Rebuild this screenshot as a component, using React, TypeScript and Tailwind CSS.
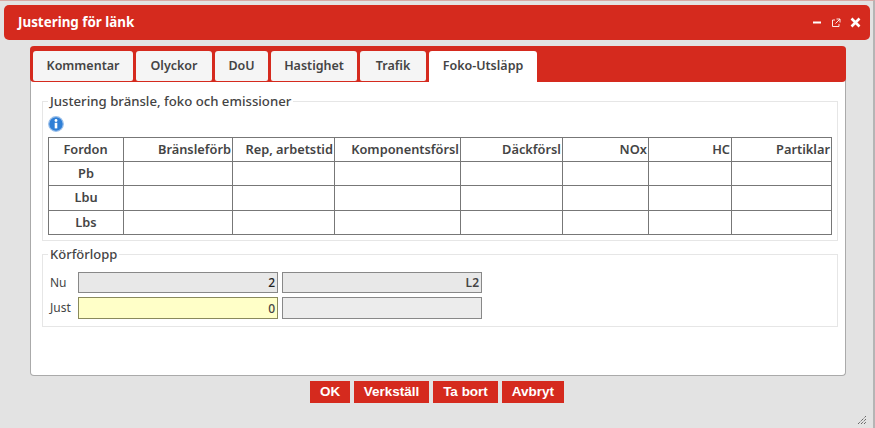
const font = { fontFamily: "'Noto Sans', 'DejaVu Sans', sans-serif" };

const tabs = ["Kommentar", "Olyckor", "DoU", "Hastighet", "Trafik"];
const tabWidths = ["w-[100px]", "w-[76px]", "w-[53px]", "w-[86px]", "w-[66px]"];
const cols = [
  { t: "Fordon", w: "w-[75px]", c: "text-center" },
  { t: "Bränsleförb", w: "w-[109px]", c: "text-right" },
  { t: "Rep, arbetstid", w: "w-[102px]", c: "text-right" },
  { t: "Komponentsförsl", w: "w-[126px]", c: "text-right" },
  { t: "Däckförsl", w: "w-[102px]", c: "text-right" },
  { t: "NOx", w: "w-[86px]", c: "text-right" },
  { t: "HC", w: "w-[83px]", c: "text-right" },
  { t: "Partiklar", w: "w-[100px]", c: "text-right" },
];
const rows = [
  { t: "Pb", h: "h-[24px]" },
  { t: "Lbu", h: "h-[25px]" },
  { t: "Lbs", h: "h-[24px]" },
];

export default function App() {
  return (
    <div style={font} className="w-[875px] h-[428px] overflow-hidden bg-[#e3e3e3] border-r-2 border-[#b5b5b5] border-t border-t-[#d9a9a5] pt-[4px] pl-[4px] pr-[2px] flex flex-col relative">
      <div className="h-[35px] w-[866px] shrink-0 bg-[#d52a1e] rounded-[5px] pl-[14px] pr-[9px] flex items-center justify-between">
        <span className="text-white font-bold text-[13.4px]">Justering för länk</span>
        <div className="flex items-center text-white">
          <svg width="10" height="10" viewBox="0 0 10 10" className="mr-[9px]"><rect x="1" y="3.5" width="8" height="2" fill="#fff" /></svg>
          <svg width="10" height="10" viewBox="0 0 10 10" fill="none" stroke="#fff" strokeWidth="0.9" className="mr-[9px]">
            <path d="M4 2H1.5v6.5H8V6" />
            <path d="M5.5 1H9v3.5M9 1 4.5 5.5" />
          </svg>
          <svg width="11" height="11" viewBox="0 0 11 11" stroke="#fff" strokeWidth="2.6"><path d="M1.5 1.5l8 8M9.5 1.5l-8 8" /></svg>
        </div>
      </div>

      <div className="ml-[26px] mt-[6px] w-[816px] h-[330px] shrink-0 bg-white border-x border-b border-[#aaa] rounded-[4px] flex flex-col">
        <div className="h-[36px] -mx-px bg-[#d52a1e] rounded-[4px] flex items-end pl-[3px] gap-[3px] pt-[5px]">
          {tabs.map((t, i) => (
            <div key={t} className={`${tabWidths[i]} h-[30px] mb-px bg-[#f5f5f5] rounded-t-[3px] rounded-b-[2px] text-[12.5px] font-semibold text-[#444] flex items-center justify-center`}>{t}</div>
          ))}
          <div className="w-[108px] h-[31px] bg-white rounded-t-[3px] text-[12.5px] font-semibold text-[#444] flex items-center justify-center">Foko-Utsläpp</div>
        </div>

        <fieldset className="ml-[11px] mt-[12px] w-[796px] h-[147px] border border-[#e6e6e6] px-[5px]">
          <legend className="px-[2px] text-[13.2px] font-medium text-[#444] leading-[14px]">Justering bränsle, foko och emissioner</legend>
          <svg width="16" height="16" viewBox="0 0 16 16" className="mt-[8px] mb-[5px] block">
            <circle cx="8" cy="8" r="7.3" fill="#2f7fd6" stroke="#9cc0ea" strokeWidth="1.2" />
            <circle cx="8" cy="4.5" r="1.4" fill="#fff" />
            <rect x="6.7" y="6.8" width="2.6" height="5.6" fill="#fff" />
          </svg>
          <table className="border-collapse table-fixed w-[784px] text-[12.8px] text-[#444]">
            <thead>
              <tr className="h-[24px]">
                {cols.map((c) => (
                  <th key={c.t} className={`${c.w} ${c.c} border border-[#777] font-semibold p-0 pr-px`}>{c.t}</th>
                ))}
              </tr>
            </thead>
            <tbody>
              {rows.map((r) => (
                <tr key={r.t} className={r.h}>
                  <th className="border border-[#777] font-semibold p-0 text-center">{r.t}</th>
                  {cols.slice(1).map((c) => (
                    <td key={c.t} className="border border-[#777]" />
                  ))}
                </tr>
              ))}
            </tbody>
          </table>
        </fieldset>

        <fieldset className="ml-[11px] mt-[6px] w-[796px] h-[80px] border border-[#e6e6e6] pl-[7px] flex flex-col">
          <legend className="-ml-[2px] px-[2px] text-[13px] font-medium text-[#444] leading-[14px]">Körförlopp</legend>
          <div className="mt-[11px] flex items-center h-[21px]">
            <span className="w-[28px] text-[12px] text-[#444]">Nu</span>
            <div className="w-[200px] h-[21px] bg-[#e8e8e8] border border-[#888] text-[12px] font-medium text-[#222] text-right pr-[2px] leading-[20px]">2</div>
            <div className="ml-[4px] w-[200px] h-[21px] bg-[#e8e8e8] border border-[#888] text-[12px] font-semibold text-[#444] text-right pr-[2px] leading-[20px]">L2</div>
          </div>
          <div className="mt-[4px] flex items-center h-[22px]">
            <span className="w-[28px] text-[12px] text-[#444]">Just</span>
            <div className="w-[200px] h-[22px] bg-[#ffffc8] border border-[#8a8a5c] text-[12px] font-medium text-[#444] text-right pr-[2px] leading-[21px]">0</div>
            <div className="ml-[4px] w-[200px] h-[22px] bg-[#ececec] border border-[#888]" />
          </div>
        </fieldset>
      </div>

      <div className="mt-[5px] ml-[306px] flex gap-[4px] text-white font-bold text-[13.5px] [font-family:'Liberation_Sans',sans-serif]">
        <div className="w-[40px] h-[22px] bg-[#d52a1e] flex items-center justify-center">OK</div>
        <div className="w-[75px] h-[22px] bg-[#d52a1e] flex items-center justify-center">Verkställ</div>
        <div className="w-[65px] h-[22px] bg-[#d52a1e] flex items-center justify-center">Ta bort</div>
        <div className="w-[62px] h-[22px] bg-[#d52a1e] flex items-center justify-center">Avbryt</div>
      </div>

      <svg width="10" height="10" viewBox="0 0 10 10" className="absolute right-[6px] bottom-[3px]" stroke="#333" strokeWidth="1" strokeDasharray="1 1">
        <path d="M1 9 9 1M4 9l5-5M7 9l2-2" />
      </svg>
    </div>
  );
}
